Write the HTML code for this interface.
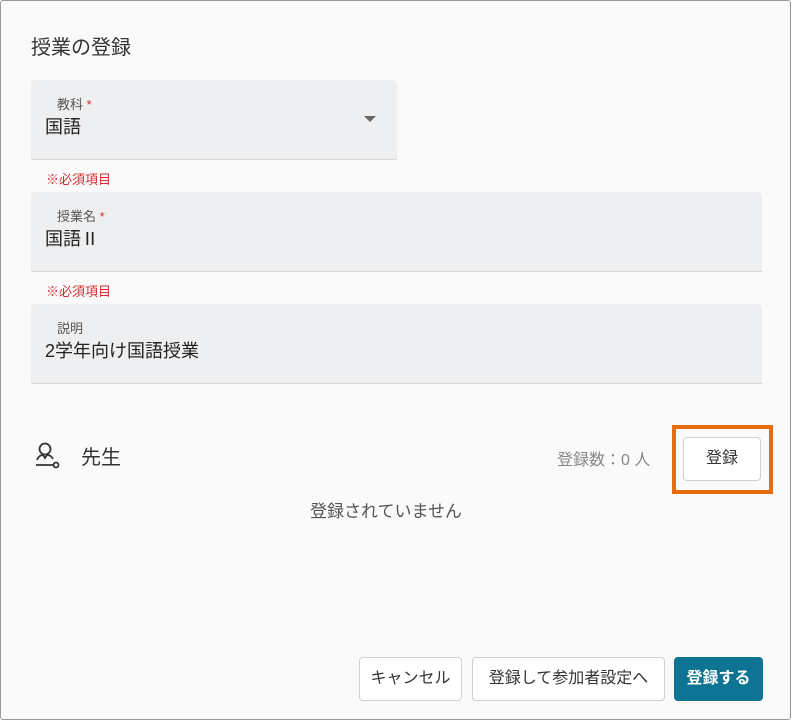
<!DOCTYPE html>
<html><head><meta charset="utf-8"><style>
*{box-sizing:border-box;margin:0;padding:0}
body{width:792px;height:721px;background:#fff;font-family:"Liberation Sans","Noto Sans CJK JP",sans-serif;position:relative;overflow:hidden}
.dlg{position:absolute;left:0;top:0;width:791px;height:720px;background:#fafafa;border:1px solid #9a9a9a;border-radius:3px}
.abs{position:absolute}
.f{position:absolute;background:#eeeff1;border-radius:4px 4px 0 0;border-bottom:1px solid #d8d8d8}
.lab{position:absolute;left:26px;top:14px;font-size:13px;color:#555}
.val{position:absolute;left:14px;top:33px;font-size:18px;color:#222}
.req{position:absolute;left:45px;font-size:13px;color:#d32f2f}
.btn{position:absolute;border:1px solid #d0d0d0;border-radius:4px;background:#fff;font-size:16px;color:#333;text-align:center;line-height:42px;height:44px}
</style></head><body>
<div class="dlg">
<div class="abs" style="left:30px;top:30px;font-size:20px;color:#333">授業の登録</div>
<div class="f" style="left:30px;top:79px;width:366px;height:80px"><div class="lab">教科 <span style="color:#d32f2f">*</span></div><div class="val">国語</div>
<div class="abs" style="left:333px;top:36px;width:0;height:0;border-left:6px solid transparent;border-right:6px solid transparent;border-top:6px solid #666"></div></div>
<div class="req" style="top:168px">※必須項目</div>
<div class="f" style="left:30px;top:191px;width:731px;height:80px"><div class="lab">授業名 <span style="color:#d32f2f">*</span></div><div class="val">国語Ⅱ</div></div>
<div class="req" style="top:280px">※必須項目</div>
<div class="f" style="left:30px;top:303px;width:731px;height:80px"><div class="lab">説明</div><div class="val">2学年向け国語授業</div></div>
<svg class="abs" style="left:33px;top:440px" width="28" height="28" viewBox="0 0 28 28" fill="none" stroke="#333" stroke-width="1.8"><circle cx="11" cy="8" r="5.5"/><path d="M3 19 Q5 14 9 14 L11 17 L13 14 Q17 14 19 18"/><path d="M2 24 H19"/><circle cx="22" cy="24" r="2.5"/></svg>
<div class="abs" style="left:80px;top:440px;font-size:20px;color:#333">先生</div>
<div class="abs" style="left:556px;top:445px;font-size:16px;color:#888">登録数：0 人</div>
<div class="abs" style="left:671px;top:424px;width:101px;height:69px;border:4px solid #e66c0c"></div>
<div class="btn" style="left:682px;top:436px;width:78px">登録</div>
<div class="abs" style="left:309px;top:496px;font-size:17px;color:#555">登録されていません</div>
<div class="btn" style="left:358px;top:656px;width:103px">キャンセル</div>
<div class="btn" style="left:471px;top:656px;width:193px">登録して参加者設定へ</div>
<div class="btn" style="left:673px;top:656px;width:89px;background:#0e7493;border-color:#0e7493;color:#fff;font-weight:bold">登録する</div>
</div>
</body></html>
